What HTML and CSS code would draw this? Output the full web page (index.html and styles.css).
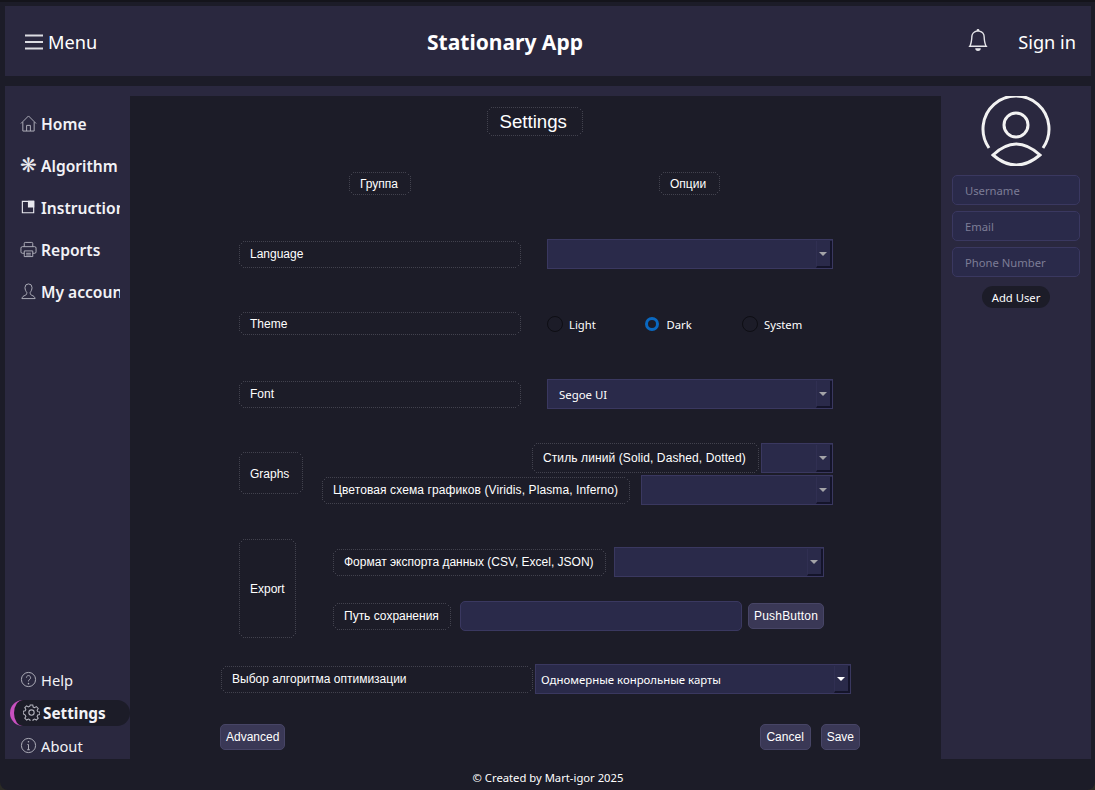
FILE: index.html
```html
<!DOCTYPE html>
<html lang="en">
<head>
    <meta charset="UTF-8">
    <meta name="viewport" content="width=device-width, initial-scale=1.0">
    <title>Stationary App</title>
    <link rel="stylesheet" href="styles.css">
</head>
<body>
<div class="window">
    <header class="topbar">
        <div class="menu-btn">
            <svg class="menu-icon" viewBox="0 0 18 16" width="18" height="16"><path d="M0 1.500h18M0 8h18M0 14.500h18"/></svg>
            <span>Menu</span>
        </div>
        <div class="app-title">Stationary App</div>
        <div class="top-right">
            <svg class="bell" viewBox="0 0 16 16" width="22" height="22"><path d="M8 16a2 2 0 0 0 2-2H6a2 2 0 0 0 2 2zM8 1.918l-.797.161A4.002 4.002 0 0 0 4 6c0 .628-.134 2.197-.459 3.742-.16.767-.376 1.566-.663 2.258h10.244c-.287-.692-.502-1.49-.663-2.258C12.134 8.197 12 6.628 12 6a4.002 4.002 0 0 0-3.203-3.92L8 1.917zM14.22 12c.223.447.481.801.78 1H1c.299-.199.557-.553.78-1C2.68 10.2 3 6.88 3 6c0-2.42 1.72-4.44 4.005-4.901a1 1 0 1 1 1.99 0A5.002 5.002 0 0 1 13 6c0 .88.32 4.2 1.22 6z"/></svg>
            <span>Sign in</span>
        </div>
    </header>

    <div class="content">
        <nav class="sidebar">
            <div class="nav-top">
                <div class="nav-item">
                    <svg class="ico" viewBox="0 0 18 18"><path d="M1 9 9 1 17 9M3 7.500v9.500h12V7.500M7 17V11h4v6"/></svg>
                    <span>Home</span>
                </div>
                <div class="nav-item">
                    <span class="ico glyph">❋</span>
                    <span>Algorithm</span>
                </div>
                <div class="nav-item">
                    <svg class="ico ico-light" viewBox="0 0 18 18"><path d="M2.500 2.500h12v12h-12z"/><path class="solid" d="M9 2.500h5.500v6H9z"/></svg>
                    <span>Instructions</span>
                </div>
                <div class="nav-item">
                    <svg class="ico" viewBox="0 0 18 18"><path d="M4.500 6V2.500a1 1 0 0 1 1-1h7a1 1 0 0 1 1 1V6M4.500 13H2.500a1.500 1.500 0 0 1-1.500-1.500V7.500A1.500 1.500 0 0 1 2.500 6h13A1.500 1.500 0 0 1 17 7.500v4a1.500 1.500 0 0 1-1.500 1.500h-2"/><path d="M4.500 10.500h9v6h-9zM6.500 13h5M6.500 14.800h5"/></svg>
                    <span>Reports</span>
                </div>
                <div class="nav-item">
                    <svg class="ico" viewBox="0 0 18 18"><path d="M9 1a3.700 3.700 0 0 0-3.700 3.700c0 2.300.9 4 1.900 5.300 0 1.700-.5 2.700-2 3.200-1.500.5-2.700 1.300-3.200 3.300h14c-.5-2-1.700-2.800-3.200-3.300-1.500-.5-2-1.500-2-3.200 1-1.300 1.900-3 1.900-5.300A3.700 3.700 0 0 0 9 1z"/></svg>
                    <span>My account</span>
                </div>
            </div>
            <div class="nav-bottom">
                <div class="nav-item small">
                    <svg class="ico" viewBox="0 0 18 18"><circle cx="9" cy="9" r="7.500"/><path d="M6.800 7a2.200 2.200 0 1 1 3.400 1.900C9.400 9.400 9 9.900 9 11"/><path class="dot" d="M9 13.300v.1"/></svg>
                    <span>Help</span>
                </div>
                <div class="nav-item small active">
                    <svg class="ico" viewBox="0 0 16 16"><circle cx="8" cy="8" r="2.500"/><path d="M6.800 1h2.400l.4 1.900 1.300.6 1.700-1 1.700 1.700-1 1.700.6 1.300 1.900.4v2.400l-1.900.4-.6 1.300 1 1.700-1.700 1.700-1.700-1-1.300.6-.4 1.900H6.800l-.4-1.900-1.300-.6-1.700 1-1.700-1.700 1-1.700-.6-1.300L0.200 9.200V6.800l1.900-.4.6-1.300-1-1.700 1.700-1.700 1.700 1 1.300-.6z"/></svg>
                    <span>Settings</span>
                </div>
                <div class="nav-item small">
                    <svg class="ico" viewBox="0 0 18 18"><circle cx="9" cy="9" r="7.500"/><path d="M9 8v5.500M7.500 13.500h3M7.800 8H9"/><path class="dot" d="M9 5v.1"/></svg>
                    <span>About</span>
                </div>
            </div>
        </nav>

        <main class="settings">
            <div class="title-row"><div class="lbl title">Settings</div></div>

            <div class="row head-row">
                <div class="lbl head-group">Группа</div>
                <div class="lbl head-options">Опции</div>
            </div>

            <div class="row lang-row">
                <div class="lbl group-lbl">Language</div>
                <div class="combo w286"><span class="arrow"></span></div>
            </div>

            <div class="row theme-row">
                <div class="lbl group-lbl">Theme</div>
                <div class="radios">
                    <label class="radio"><input type="radio" name="theme"><span>Light</span></label>
                    <label class="radio"><input type="radio" name="theme" checked><span>Dark</span></label>
                    <label class="radio"><input type="radio" name="theme"><span>System</span></label>
                </div>
            </div>

            <div class="row font-row">
                <div class="lbl group-lbl">Font</div>
                <div class="combo w286"><span class="combo-text">Segoe UI</span><span class="arrow"></span></div>
            </div>

            <div class="row graphs-row">
                <div class="lbl graphs-lbl">Graphs</div>
                <div class="graphs-col">
                    <div class="sub-row">
                        <div class="lbl tall spaced line-lbl">Стиль линий (Solid, Dashed, Dotted)</div>
                        <div class="combo w72"><span class="arrow"></span></div>
                    </div>
                    <div class="sub-row gap-11">
                        <div class="lbl spaced scheme-lbl">Цветовая схема графиков (Viridis, Plasma, Inferno)</div>
                        <div class="combo w192"><span class="arrow"></span></div>
                    </div>
                </div>
            </div>

            <div class="row export-row">
                <div class="lbl export-lbl">Export</div>
                <div class="export-col">
                    <div class="sub-row left">
                        <div class="lbl format-lbl">Формат экспорта данных (CSV, Excel, JSON)</div>
                        <div class="combo w210"><span class="arrow"></span></div>
                    </div>
                    <div class="sub-row left path-row">
                        <div class="lbl path-lbl">Путь сохранения</div>
                        <input class="path-input" type="text">
                        <button class="btn btn-push">PushButton</button>
                    </div>
                </div>
            </div>

            <div class="row algo-row">
                <div class="lbl algo-lbl">Выбор алгоритма оптимизации</div>
                <div class="combo w316"><span class="combo-text near">Одномерные конрольные карты</span><span class="arrow white"></span></div>
            </div>

            <div class="row actions">
                <button class="btn">Advanced</button>
                <div class="actions-right">
                    <button class="btn btn-cancel">Cancel</button>
                    <button class="btn">Save</button>
                </div>
            </div>
        </main>

        <aside class="userpanel">
            <svg class="avatar" viewBox="0 0 70 70" width="70" height="70">
                <path d="M8 52A33 33 0 1 1 62 52"/>
                <circle cx="35" cy="29" r="12"/>
                <path d="M12 59Q35 37 59 59Q35 79 12 59z"/>
            </svg>
            <input class="field" type="text" placeholder="Username">
            <input class="field" type="text" placeholder="Email">
            <input class="field" type="text" placeholder="Phone Number">
            <button class="add-user">Add User</button>
        </aside>
    </div>

    <footer class="footer">© Created by Mart-igor 2025</footer>
</div>
</body>
</html>
```

FILE: styles.css
```css
* {
    box-sizing: border-box;
}
html, body {
    margin: 0;
    padding: 0;
    background-color: #2b2b26;
}
.window {
    width: 1095px;
    height: 790px;
    overflow: hidden;
    display: flex;
    flex-direction: column;
    padding: 4px 4px 0 5px;
    background-color: #1c1c28;
    border-top: 2px solid #14141b;
    border-radius: 0 0 8px 8px;
    color: #fff;
    font-family: "Noto Sans", "Open Sans", sans-serif;
}

/* top bar */
.topbar {
    height: 70px;
    flex: none;
    display: grid;
    grid-template-columns: 402px auto 1fr;
    align-items: center;
    padding: 2px 15px 0 20px;
    background-color: #2a283f;
}
.menu-btn {
    display: flex;
    align-items: center;
    gap: 5px;
    font-size: 18.200px;
}
.menu-icon {
    fill: none;
    stroke: #dcdce2;
    stroke-width: 1.800;
}
.app-title {
    font-size: 21px;
    font-weight: 700;
}
.top-right {
    display: flex;
    justify-content: flex-end;
    align-items: center;
    gap: 29px;
    font-size: 18.200px;
}
.bell {
    fill: #e6e6ea;
    margin-bottom: 4px;
}

/* main area */
.content {
    flex: 1;
    display: flex;
    margin-top: 10px;
    min-height: 0;
    background-color: #2a283f;
}
.sidebar {
    width: 125px;
    flex: none;
    display: flex;
    flex-direction: column;
    justify-content: space-between;
    padding-top: 17px;
}
.nav-item {
    height: 42px;
    width: 100px;
    margin-left: 15px;
    display: flex;
    align-items: center;
    gap: 4px;
    overflow: hidden;
    white-space: nowrap;
    font-size: 15.600px;
    font-weight: 600;
    color: #f2f2f6;
}
.ico {
    width: 17px;
    height: 17px;
    flex: none;
    margin-bottom: 2px;
    fill: none;
    stroke: #b4b4be;
    stroke-width: 1;
}
.ico-light {
    stroke: #e8e8ee;
    stroke-width: 1.200;
}
.ico .solid {
    fill: #e8e8ee;
}
.ico .dot {
    stroke-width: 1.600;
    stroke-linecap: round;
}
.glyph {
    display: flex;
    justify-content: center;
    align-items: center;
    color: #e8e8ee;
    font-family: "DejaVu Sans", sans-serif;
    font-size: 20px;
    font-weight: 400;
    line-height: 17px;
}
.nav-bottom {
    display: flex;
    flex-direction: column;
    gap: 7px;
}
.nav-item.small {
    height: 26px;
    font-size: 14.700px;
    font-weight: 400;
}
.nav-item.active {
    width: 120px;
    margin-left: 5px;
    padding-left: 9px;
    gap: 3px;
    font-size: 15.300px;
    font-weight: 700;
    background-color: #1c1c28;
    border-left: 4px solid #c850c0;
    border-radius: 13px;
}

/* settings form */
.settings {
    --dot: #42424e;
    width: 811px;
    flex: none;
    margin-top: 10px;
    padding-top: 11px;
    background-color: #1c1c28;
    font-family: "Liberation Sans", Arial, sans-serif;
    font-size: 12px;
}
/* 1px dots drawn by hand, a rounded dotted border comes out almost solid */
.lbl {
    height: 27px;
    display: flex;
    align-items: center;
    padding: 0 12px 0 11px;
    flex: none;
    white-space: nowrap;
    background-image:
        repeating-linear-gradient(90deg, var(--dot) 0 1px, transparent 1px 2px),
        repeating-linear-gradient(90deg, var(--dot) 0 1px, transparent 1px 2px),
        repeating-linear-gradient(0deg, var(--dot) 0 1px, transparent 1px 2px),
        repeating-linear-gradient(0deg, var(--dot) 0 1px, transparent 1px 2px),
        linear-gradient(var(--dot), var(--dot)),
        linear-gradient(var(--dot), var(--dot)),
        linear-gradient(var(--dot), var(--dot)),
        linear-gradient(var(--dot), var(--dot));
    background-size:
        calc(100% - 8px) 1px,
        calc(100% - 8px) 1px,
        1px calc(100% - 8px),
        1px calc(100% - 8px),
        1px 1px, 1px 1px, 1px 1px, 1px 1px;
    background-position:
        center top,
        center bottom,
        left center,
        right center,
        2px 2px,
        calc(100% - 2px) 2px,
        2px calc(100% - 2px),
        calc(100% - 2px) calc(100% - 2px);
    background-repeat: no-repeat;
}
.spaced {
    letter-spacing: 0.100px;
}
.title-row {
    display: flex;
    justify-content: center;
    padding-right: 2px;
}
.title {
    width: 96px;
    height: 29px;
    padding: 0 13px;
    font-size: 18.670px;
}
.row {
    display: flex;
    padding-left: 109px;
}
.head-row {
    margin-top: 36px;
    padding-left: 219px;
}
.head-row .lbl {
    height: 23px;
}
.head-group {
    width: 62px;
}
.head-options {
    width: 61px;
    margin-left: 248px;
}
.group-lbl {
    width: 282px;
}
.lang-row, .font-row {
    margin-top: 44px;
    align-items: center;
}
.theme-row {
    margin-top: 43px;
}
.theme-row .lbl {
    height: 23px;
}
.combo {
    height: 30px;
    flex: none;
    position: relative;
    display: flex;
    align-items: center;
    background-color: #2a2a4a;
    border: 1px solid #3a3860;
    font-family: "Noto Sans", sans-serif;
    font-size: 11.400px;
}
.combo-text {
    padding-left: 11px;
}
.combo-text.near {
    padding-left: 5px;
}
.arrow {
    position: absolute;
    top: 1px;
    right: 0;
    width: 16px;
    height: 27px;
    border-left: 1px solid #302f52;
    border-right: 2px solid #14142a;
    border-bottom: 2px solid #14142a;
}
.arrow::after {
    content: "";
    position: absolute;
    top: 11px;
    left: 2px;
    border-left: 4px solid transparent;
    border-right: 4px solid transparent;
    border-top: 4px solid #a4a4a8;
}
.arrow.white::after {
    border-top-color: #fff;
}
.w286 { width: 286px; margin-left: 26px; }
.w72 { width: 72px; }
.w192 { width: 192px; }
.w210 { width: 210px; }
.w316 { width: 316px; }

.radios {
    display: flex;
    margin-left: 26px;
    padding-top: 1px;
    font-family: "Noto Sans", sans-serif;
    font-size: 11.250px;
}
.radio {
    width: 97.500px;
    display: flex;
    align-items: center;
    gap: 6px;
}
.radio input {
    appearance: none;
    width: 16px;
    height: 16px;
    margin: 0;
    border: 1px solid #0e0e14;
    border-radius: 50%;
    background-color: #1c1c28;
}
.radio input:checked {
    width: 14px;
    height: 14px;
    margin: 0 2px 0 0;
    border: 3px solid #0a68c0;
}

.graphs-row {
    margin-top: 34px;
}
.graphs-lbl {
    width: 64px;
    height: 42px;
    margin-top: 9px;
    padding-top: 1px;
}
.graphs-col {
    width: 530px;
    display: flex;
    flex-direction: column;
    gap: 2px;
}
.sub-row {
    display: flex;
    justify-content: flex-end;
    align-items: center;
    gap: 2px;
}
.sub-row .tall {
    height: 30px;
}
.line-lbl {
    width: 227px;
}
.scheme-lbl {
    width: 308px;
}
.format-lbl {
    width: 273px;
}
.gap-11 {
    gap: 11px;
}
.export-row {
    margin-top: 34px;
}
.export-lbl {
    width: 57px;
    height: 99px;
}
.export-col {
    margin: 8px 0 0 37px;
    display: flex;
    flex-direction: column;
    gap: 24px;
}
.sub-row.left {
    justify-content: flex-start;
    gap: 8px;
}
.path-lbl {
    width: 118px;
    margin-right: 1px;
}
.path-row .btn {
    margin-left: -2px;
}
.path-input {
    width: 282px;
    height: 30px;
    background-color: #2a2a4a;
    border: 1px solid #3a3860;
    border-radius: 5px;
}
.btn {
    height: 26px;
    padding: 0 5px;
    color: #fff;
    font-family: "Liberation Sans", Arial, sans-serif;
    font-size: 12px;
    background-color: #3a3856;
    border: 1px solid #474566;
    border-radius: 5px;
}
.btn-push {
    width: 76px;
    letter-spacing: 0.200px;
}
.btn-cancel {
    width: 51px;
}
.algo-row {
    margin-top: 26px;
    padding-left: 91px;
    align-items: center;
    gap: 2px;
}
.algo-lbl {
    width: 312px;
}
.actions {
    margin-top: 30px;
    padding: 0 81px 0 90px;
    justify-content: space-between;
}
.actions-right {
    display: flex;
    gap: 10px;
}

/* user panel */
.userpanel {
    flex: 1;
    display: flex;
    flex-direction: column;
    align-items: center;
    padding-top: 10px;
}
.avatar {
    margin-bottom: 9px;
    fill: none;
    stroke: #f2f2f2;
    stroke-width: 3;
}
.field {
    width: 128px;
    height: 30px;
    margin-bottom: 6px;
    padding: 0 12px;
    color: #fff;
    font-family: "Noto Sans", sans-serif;
    font-size: 11.250px;
    background-color: #2a2a4a;
    border: 1px solid #3a3860;
    border-radius: 5px;
}
.field::placeholder {
    color: #7d7d96;
}
.add-user {
    width: 68px;
    height: 22px;
    margin-top: 3px;
    padding: 0;
    color: #fff;
    font-family: "Noto Sans", sans-serif;
    font-size: 11.250px;
    background-color: #1c1c28;
    border: none;
    border-radius: 11px;
}

.footer {
    height: 31px;
    flex: none;
    display: flex;
    justify-content: center;
    align-items: center;
    padding-top: 6px;
    font-size: 11.250px;
}
```
